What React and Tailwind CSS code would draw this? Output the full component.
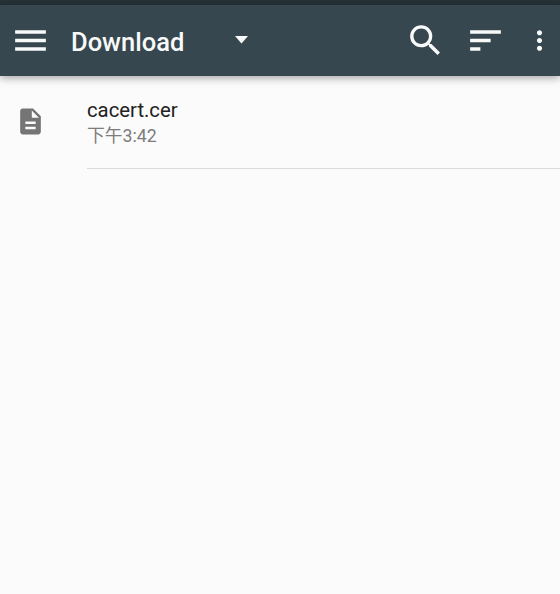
function Icon({ d, className }) {
  return (
    <svg viewBox="0 0 24 24" fill="currentColor" className={`shrink-0 ${className}`}>
      <path d={d} />
    </svg>
  );
}

const MENU = "M3 18h18v-2H3v2zm0-5h18v-2H3v2zm0-7v2h18V6H3z";
const SEARCH =
  "M15.5 14h-.79l-.28-.27A6.471 6.471 0 0 0 16 9.500 6.500 6.500 0 1 0 9.500 16c1.610 0 3.090-.590 4.230-1.570l.270.280v.790l5 4.990L20.490 19l-4.990-5zm-6 0C7.010 14 5 11.990 5 9.500S7.010 5 9.500 5 14 7.010 14 9.500 11.990 14 9.500 14z";
const SORT = "M3 18h6v-2H3v2zM3 6v2h18V6H3zm0 7h12v-2H3v2z";
const MORE =
  "M12 8c1.100 0 2-.900 2-2s-.900-2-2-2-2 .900-2 2 .900 2 2 2zm0 2c-1.100 0-2 .900-2 2s.900 2 2 2 2-.900 2-2-.900-2-2-2zm0 6c-1.100 0-2 .900-2 2s.900 2 2 2 2-.900 2-2-.900-2-2-2z";
const DOC =
  "M14 2H6c-1.100 0-1.990.900-1.990 2L4 20c0 1.100.890 2 1.990 2H18c1.100 0 2-.900 2-2V8l-6-6zm2 16H8v-2h8v2zm0-4H8v-2h8v2zm-3-5V3.500L18.500 9H13z";

export default function App() {
  return (
    <div className="flex h-[594px] w-[560px] flex-col overflow-hidden bg-[#fbfbfb] font-['Roboto','Noto_Sans_CJK_SC',sans-serif]">
      <div className="h-[5px] shrink-0 bg-[#263238]" />
      <header className="flex h-[71px] shrink-0 items-center bg-[#37474f] text-[#f8f9f9] shadow-[0_2px_8px_rgba(0,0,0,0.36)]">
        <button className="ml-[10px] flex">
          <Icon d={MENU} className="size-[41px]" />
        </button>
        <h1 className="ml-5 w-[164px] pt-[2px] text-[25.5px] leading-[30px] font-medium whitespace-nowrap">Download</h1>
        <svg viewBox="0 0 13 8" fill="currentColor" className="mb-px h-[8px] w-[13px]">
          <path d="M0 0h13L6.500 7.500z" />
        </svg>
        <button className="ml-[156.500px] flex">
          <Icon d={SEARCH} className="size-[41px]" />
        </button>
        <button className="ml-[19.500px] flex">
          <Icon d={SORT} className="size-[41px]" />
        </button>
        <button className="ml-[18px] flex">
          <Icon d={MORE} className="size-[31px]" />
        </button>
      </header>
      <main className="flex h-[93px] shrink-0">
        <Icon d={DOC} className="mt-[30px] ml-[15px] size-[31px] text-[#757575]" />
        <div className="ml-[41px] flex-1 border-b border-[#dadada] pt-[22px]">
          <p className="text-[20.300px] leading-[25px] text-[#212121]">cacert.cer</p>
          <p className="text-[17.800px] leading-[25px] text-[#7c7c7c]">下午3:42</p>
        </div>
      </main>
    </div>
  );
}
